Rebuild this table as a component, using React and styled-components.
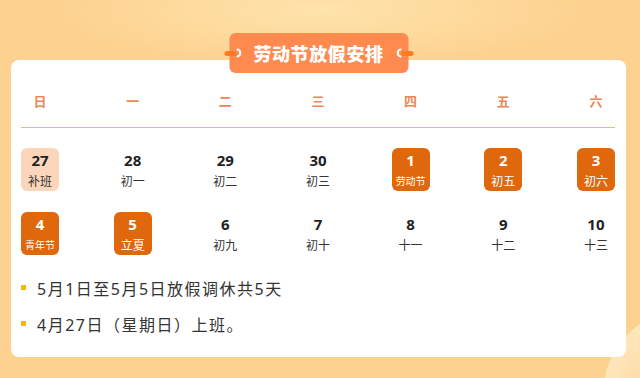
import React from "react";
import styled, { createGlobalStyle } from "styled-components";

const GlobalStyle = createGlobalStyle`
  html, body {
    margin: 0;
    padding: 0;
  }
  body {
    font-family: "Noto Sans", "Noto Sans CJK SC", sans-serif;
  }
`;

const Page = styled.div`
  width: 640px;
  height: 378px;
  box-sizing: border-box;
  padding: 60px 14px 0 11px;
  overflow: hidden;
  background:
    radial-gradient(circle 90px at 690px 395px, #fdd08e 0%, #fee6bb 96%, rgba(254, 230, 187, 0) 97%),
    radial-gradient(ellipse 280px 60px at 50% 10px, #fee3ab 0%, rgba(254, 226, 169, 0) 100%),
    #fdd18f;
`;

const Card = styled.div`
  position: relative;
  height: 297px;
  box-sizing: border-box;
  background: #fff;
  border-radius: 8px;
  padding: 0 11px 0 10px;
`;

const Badge = styled.div`
  position: absolute;
  top: -27px;
  left: 50%;
  transform: translateX(-50%);
  width: 179px;
  height: 40px;
  border-radius: 6px;
  background: #ff8a4f;
  display: flex;
  align-items: center;
  justify-content: center;
  color: #fff;
  font-family: "Noto Sans CJK SC", sans-serif;
  font-weight: 900;
  font-size: 18px;
  letter-spacing: 0.6px;
`;

const Deco = styled.svg`
  position: absolute;
  top: 14px;
  ${(p) => (p.$side === "left" ? "left: -6px;" : "right: -6px;")}
`;

const Row = styled.div`
  display: flex;
  justify-content: space-between;
`;

const HeadRow = styled(Row)`
  padding-top: 32px;
  padding-bottom: 17px;
  border-bottom: 1px solid #ebc540;
`;

const WeekDay = styled.div`
  width: 38px;
  text-align: center;
  line-height: 18px;
  font-size: 13px;
  font-weight: 700;
  color: #ea8759;
  font-family: "Noto Sans CJK SC", sans-serif;
`;

const DayRow = styled(Row)`
  margin-top: ${(p) => p.$gap}px;
`;

const tones = {
  plain: { bg: "transparent", num: "#222", sub: "#333" },
  work: { bg: "#fbd6bb", num: "#222", sub: "#333" },
  off: { bg: "#e0680c", num: "#fff", sub: "#fff" },
};

const Day = styled.div`
  width: 38px;
  height: 43px;
  box-sizing: border-box;
  padding-top: 3px;
  border-radius: 6px;
  background: ${(p) => tones[p.$tone].bg};
  display: flex;
  flex-direction: column;
  align-items: center;
  gap: 4px;
`;

const Num = styled.span`
  font-size: 15px;
  line-height: 18px;
  font-weight: 700;
  color: ${(p) => tones[p.$tone].num};
`;

const Lunar = styled.span`
  font-family: "Noto Sans CJK SC", sans-serif;
  font-size: ${(p) => (p.$small ? 10 : 12)}px;
  line-height: 16px;
  white-space: nowrap;
  color: ${(p) => tones[p.$tone].sub};
`;

const Notes = styled.ul`
  list-style: none;
  margin: 24px 0 0;
  padding: 0;
  display: flex;
  flex-direction: column;
  gap: 16px;
`;

const Note = styled.li`
  display: flex;
  align-items: center;
  gap: 11px;
  font-family: "Noto Sans", "Noto Sans CJK SC", sans-serif;
  font-size: 16px;
  line-height: 20px;
  letter-spacing: 1.5px;
  color: #333;

  &::before {
    content: "";
    width: 5px;
    height: 5px;
    margin-top: -4px;
    background: #f5b80a;
  }
`;

const weekDays = ["日", "一", "二", "三", "四", "五", "六"];

const weeks = [
  [
    ["27", "补班", "work"],
    ["28", "初一", "plain"],
    ["29", "初二", "plain"],
    ["30", "初三", "plain"],
    ["1", "劳动节", "off"],
    ["2", "初五", "off"],
    ["3", "初六", "off"],
  ],
  [
    ["4", "青年节", "off"],
    ["5", "立夏", "off"],
    ["6", "初九", "plain"],
    ["7", "初十", "plain"],
    ["8", "十一", "plain"],
    ["9", "十二", "plain"],
    ["10", "十三", "plain"],
  ],
];

const DecoMark = ({ side }) => (
  <Deco $side={side} width="22" height="12" viewBox="0 0 22 12">
    {side === "left" ? (
      <>
        <rect x="1" y="4" width="12" height="5" rx="2.5" fill="#ff7b22" />
        <path d="M14 2.5 A3.6 3.6 0 0 1 14 9.5" stroke="#fff" strokeWidth="2" fill="none" strokeLinecap="round" />
      </>
    ) : (
      <>
        <rect x="9" y="4" width="12" height="5" rx="2.5" fill="#ff7b22" />
        <path d="M8 2.5 A3.6 3.6 0 0 0 8 9.5" stroke="#fff" strokeWidth="2" fill="none" strokeLinecap="round" />
      </>
    )}
  </Deco>
);

export default function App() {
  return (
    <>
      <GlobalStyle />
      <Page>
        <Card>
          <Badge>
            <DecoMark side="left" />
            劳动节放假安排
            <DecoMark side="right" />
          </Badge>
          <HeadRow>
            {weekDays.map((d) => (
              <WeekDay key={d}>{d}</WeekDay>
            ))}
          </HeadRow>
          {weeks.map((week, i) => (
            <DayRow key={i} $gap={i === 0 ? 20 : 21}>
              {week.map(([num, lunar, tone]) => (
                <Day key={num} $tone={tone}>
                  <Num $tone={tone}>{num}</Num>
                  <Lunar $tone={tone} $small={tone === "off" && lunar.length > 2}>
                    {lunar}
                  </Lunar>
                </Day>
              ))}
            </DayRow>
          ))}
          <Notes>
            <Note>5月1日至5月5日放假调休共5天</Note>
            <Note>4月27日（星期日）上班。</Note>
          </Notes>
        </Card>
      </Page>
    </>
  );
}
